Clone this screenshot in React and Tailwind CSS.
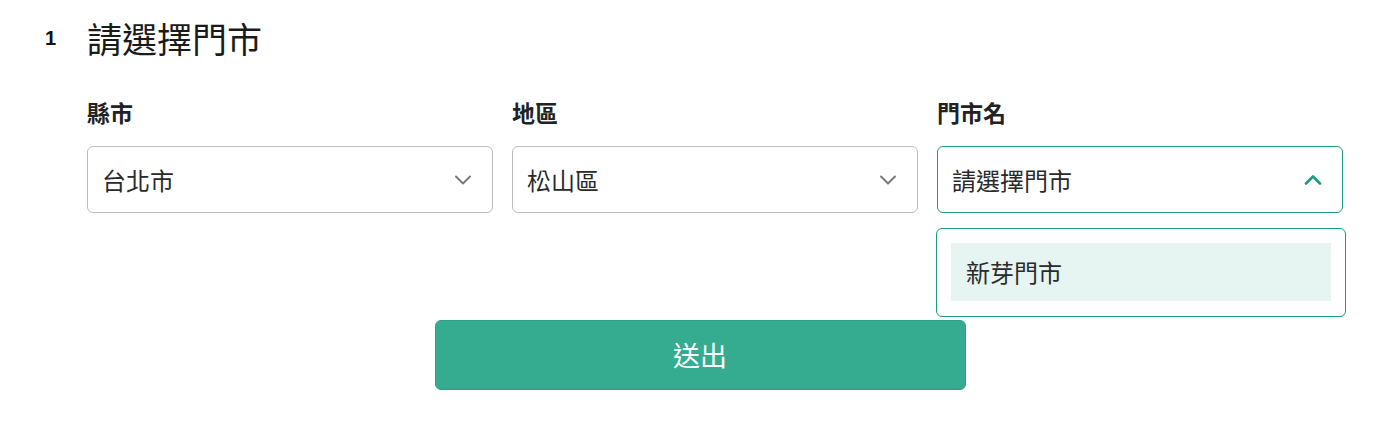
import React from "react";

const font = {
  fontFamily: '"Noto Sans CJK TC", "Noto Sans", sans-serif',
};

const ChevronDown = () => (
  <svg width="18" height="10" viewBox="0 0 18 10" fill="none">
    <path d="M2 1.5l7 7 7-7" stroke="#7a7a7a" strokeWidth="2" strokeLinecap="round" strokeLinejoin="round" />
  </svg>
);

const ChevronUp = () => (
  <svg width="18" height="10" viewBox="0 0 18 10" fill="none">
    <path d="M2 8.5l7-7 7 7" stroke="#1a9c80" strokeWidth="2.6" strokeLinecap="round" strokeLinejoin="round" />
  </svg>
);

const Field = ({ label, value, open }) => {
  return (
    <div className="relative">
      <div className="text-[23px] leading-[32px] font-semibold text-[#222] mb-[18px]">{label}</div>
      <div
        className={
          open
            ? "h-[67px] rounded-[6px] border border-[#1a9c80] bg-white flex items-center justify-between pl-[14px] pr-[20px]"
            : "h-[67px] rounded-[6px] border border-[#bdbdbd] bg-white flex items-center justify-between pl-[14px] pr-[20px]"
        }
      >
        <span className="text-[24px] text-[#2a2a2a]">{value}</span>
        {open ? <ChevronUp /> : <ChevronDown />}
      </div>
      {open && (
        <div className="absolute top-full mt-[15px] -left-[1px] -right-[3px] rounded-[6px] border border-[#1a9c80] bg-white px-[14px] pt-[14px] pb-[15px] z-10">
          <div className="h-[58px] bg-[#e6f4f2] flex items-center pl-[15px] text-[24px] text-[#2a2a2a]">
            新芽門市
          </div>
        </div>
      )}
    </div>
  );
};

export default function App() {
  return (
    <div className="w-[1400px] h-[431px] bg-white" style={font}>
      {/* Title */}
      <div className="flex items-center pt-[16px] pl-[45px]">
        <span className="w-[42px] text-[20px] font-bold text-[#111]" style={{ fontFamily: '"Liberation Sans", sans-serif' }}>
          1
        </span>
        <h2 className="text-[35px] leading-[44px] text-[#1a1a1a]">請選擇門市</h2>
      </div>

      {/* Selects */}
      <div className="ml-[87px] w-[1256px] mt-[36px] grid grid-cols-3 gap-[19px]">
        <Field label="縣市" value="台北市" />
        <Field label="地區" value="松山區" />
        <Field label="門市名" value="請選擇門市" open />
      </div>

      {/* Submit */}
      <div className="flex justify-center mt-[107px]">
        <button className="w-[531px] h-[70px] rounded-[6px] bg-[#35ab90] border border-[#2e9f86] text-white text-[27px]">
          送出
        </button>
      </div>
    </div>
  );
}
